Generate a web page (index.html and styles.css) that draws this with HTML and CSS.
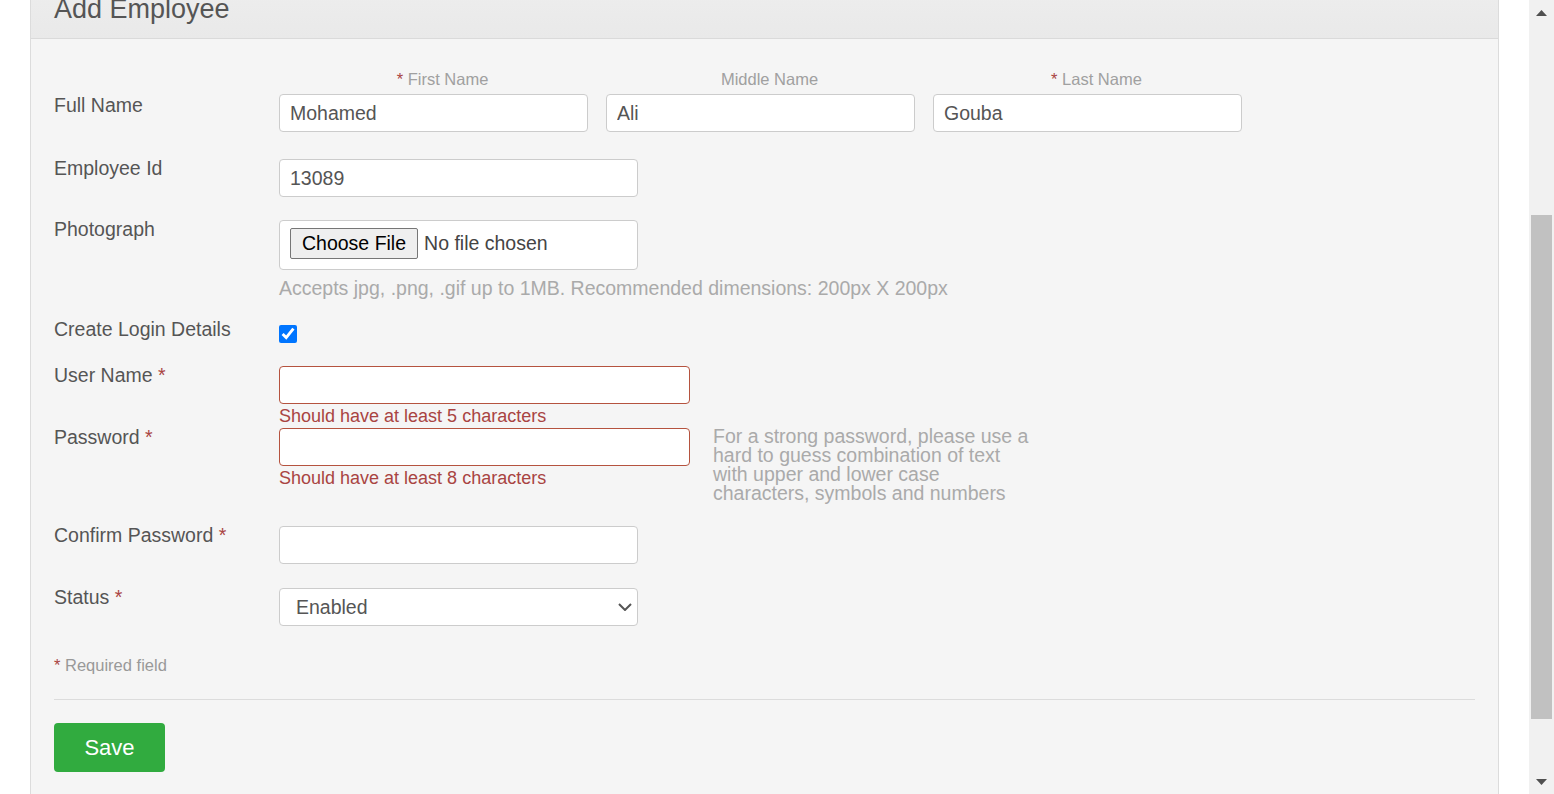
FILE: index.html
```html
<!DOCTYPE html>
<html lang="en">
<head>
<meta charset="utf-8">
<title>Add Employee</title>
<link rel="stylesheet" href="styles.css">
</head>
<body>
<div class="page">
  <main class="main">
    <section class="panel">
      <header class="panel-head"><h1>Add Employee</h1></header>
      <form class="panel-body" onsubmit="return false">
        <div class="row row-name">
          <label class="lbl lbl-name">Full Name</label>
          <div class="name-fields">
            <div class="name-col"><span class="sub"><span class="req">*</span> First Name</span><input class="input w-name" type="text" value="Mohamed"></div>
            <div class="name-col"><span class="sub">Middle Name</span><input class="input w-name" type="text" value="Ali"></div>
            <div class="name-col"><span class="sub"><span class="req">*</span> Last Name</span><input class="input w-name" type="text" value="Gouba"></div>
          </div>
        </div>

        <div class="row row-emp">
          <label class="lbl">Employee Id</label>
          <div><input class="input w-mid" type="text" value="13089"></div>
        </div>

        <div class="row row-photo">
          <label class="lbl">Photograph</label>
          <div>
            <div class="file-box"><button type="button" class="file-btn">Choose File</button><span class="file-text">No file chosen</span></div>
            <div class="hint-line">Accepts jpg, .png, .gif up to 1MB. Recommended dimensions: 200px X 200px</div>
          </div>
        </div>

        <div class="row row-login">
          <label class="lbl">Create Login Details</label>
          <div><input class="check" type="checkbox" checked></div>
        </div>

        <div class="row row-user">
          <label class="lbl">User Name <span class="req">*</span></label>
          <div class="err-field">
            <input class="input input-err w-wide" type="text">
            <span class="err">Should have at least 5 characters</span>
          </div>
        </div>

        <div class="row row-pass">
          <label class="lbl">Password <span class="req">*</span></label>
          <div class="pass-field">
            <div class="err-field">
              <input class="input input-err w-wide" type="password">
              <span class="err">Should have at least 8 characters</span>
            </div>
            <p class="pass-hint">For a strong password, please use a hard to guess combination of text with upper and lower case characters, symbols and numbers</p>
          </div>
        </div>

        <div class="row row-confirm">
          <label class="lbl">Confirm Password <span class="req">*</span></label>
          <div><input class="input w-mid" type="password"></div>
        </div>

        <div class="row row-status">
          <label class="lbl">Status <span class="req">*</span></label>
          <div class="select-wrap">
            <select class="select">
              <option>Enabled</option>
              <option>Disabled</option>
            </select>
            <svg class="chev" viewBox="0 0 14 8" width="14" height="8"><polyline points="1,1 7,7 13,1" fill="none" stroke="#555" stroke-width="2"/></svg>
          </div>
        </div>

        <p class="required-note"><span class="req">*</span> Required field</p>
        <hr class="divider">
        <button type="button" class="btn-save">Save</button>
      </form>
    </section>
  </main>
  <div class="scrollbar">
    <div class="sb-btn"><svg viewBox="0 0 11 6" width="11" height="6"><polygon points="0,6 5.5,0 11,6" fill="#505050"/></svg></div>
    <div class="sb-track"><div class="sb-thumb"></div></div>
    <div class="sb-btn sb-btn-down"><svg viewBox="0 0 11 6" width="11" height="6"><polygon points="0,0 11,0 5.5,6" fill="#505050"/></svg></div>
  </div>
</div>
</body>
</html>
```

FILE: styles.css
```css
* { box-sizing: border-box; }

html, body {
  margin: 0;
  padding: 0;
  height: 100%;
  overflow: hidden;
  background: #fff;
}

body {
  font-family: "Liberation Sans", Arial, sans-serif;
  font-size: 19.5px;
  color: #555;
}

.page {
  display: flex;
  height: 794px;
}

.main {
  flex: 1;
  padding: 0 30px;
  overflow: hidden;
}

.panel {
  margin-top: -30px;
  min-height: 900px;
  background: #f5f5f5;
  border-left: 1px solid #dcdcdc;
  border-right: 1px solid #dcdcdc;
}

.panel-head {
  padding: 24px 23px 14px;
  background: linear-gradient(#efefef, #e9e9e9);
  border-bottom: 1px solid #dadada;
}

.panel-head h1 {
  margin: 0;
  font-size: 27px;
  line-height: 30px;
  font-weight: normal;
  color: #555;
}

.panel-body {
  padding: 30px 23px 40px;
}

.row {
  display: grid;
  grid-template-columns: 225px 1fr;
  align-items: start;
}

.lbl {
  line-height: 18px;
  color: #555;
}

.req { color: #a94442; }

.row-name .lbl-name { padding-top: 27px; }
.row-emp { margin-top: 27px; }
.row-photo { margin-top: 23px; }
.row-login { margin-top: 20px; }
.row-user { margin-top: 23px; }
.row-pass { margin-top: 0; }
.row-confirm { margin-top: 23px; }
.row-status { margin-top: 24px; }

.name-fields {
  display: grid;
  grid-template-columns: 327px 327px 327px;
}

.name-col {
  display: flex;
  flex-direction: column;
  align-items: stretch;
}

.sub {
  display: block;
  text-align: center;
  font-size: 16.5px;
  line-height: 20px;
  color: #a0a0a0;
  margin-bottom: 5px;
}

.input {
  display: block;
  height: 38px;
  border: 1px solid #ccc;
  border-radius: 4px;
  background: #fff;
  padding: 0 10px;
  font-family: inherit;
  font-size: 19.5px;
  color: #555;
  outline: none;
}

.w-name { width: 309px; }
.w-mid { width: 359px; }
.w-wide { width: 411px; }

.input-err { border-color: #b5533f; }

.file-box {
  width: 359px;
  height: 50px;
  border: 1px solid #ccc;
  border-radius: 4px;
  background: #fff;
  display: flex;
  align-items: flex-start;
  padding: 7px 10px 0;
}

.file-btn {
  height: 31px;
  padding: 0 11px;
  border: 1px solid #767676;
  border-radius: 2px;
  background: #efefef;
  font-family: inherit;
  font-size: 19.5px;
  color: #000;
  line-height: 29px;
}

.file-text {
  margin-left: 6px;
  line-height: 31px;
  color: #444;
}

.hint-line {
  margin-top: 6px;
  line-height: 24px;
  color: #aaa;
  white-space: nowrap;
}

.check {
  display: block;
  width: 18px;
  height: 18px;
  margin: 5px 0 0;
  accent-color: #0075ff;
}

.err-field {
  display: flex;
  flex-direction: column;
  width: 411px;
}

.err {
  font-size: 18px;
  line-height: 24px;
  color: #a94442;
}

.pass-field {
  display: flex;
  gap: 23px;
  align-items: flex-start;
}

.pass-hint {
  margin: -1px 0 0;
  width: 320px;
  line-height: 19px;
  color: #aaa;
}

.select-wrap {
  position: relative;
  width: 359px;
}

.select {
  appearance: none;
  -webkit-appearance: none;
  display: block;
  width: 100%;
  height: 38px;
  border: 1px solid #ccc;
  border-radius: 4px;
  background: #fff;
  padding: 0 16px;
  font-family: inherit;
  font-size: 19.5px;
  color: #555;
  outline: none;
}

.chev {
  position: absolute;
  right: 6px;
  top: 15px;
  pointer-events: none;
}

.required-note {
  margin: 29px 0 0;
  font-size: 16.5px;
  line-height: 20px;
  color: #999;
}

.divider {
  margin: 24px 0 23px;
  border: 0;
  border-top: 1px solid #dcdcdc;
  height: 0;
}

.btn-save {
  display: block;
  width: 111px;
  height: 49px;
  border: 0;
  border-radius: 4px;
  background: #31ab3f;
  color: #fff;
  font-family: inherit;
  font-size: 22px;
  padding: 0;
}

.scrollbar {
  width: 25px;
  flex: none;
  background: #f1f1f1;
  display: flex;
  flex-direction: column;
}

.sb-btn {
  height: 25px;
  display: flex;
  align-items: center;
  justify-content: center;
}

.sb-btn svg { display: block; }

.sb-track {
  flex: 1;
  padding: 190px 2px 0;
}

.sb-thumb {
  height: 504px;
  background: #c1c1c1;
}
```
